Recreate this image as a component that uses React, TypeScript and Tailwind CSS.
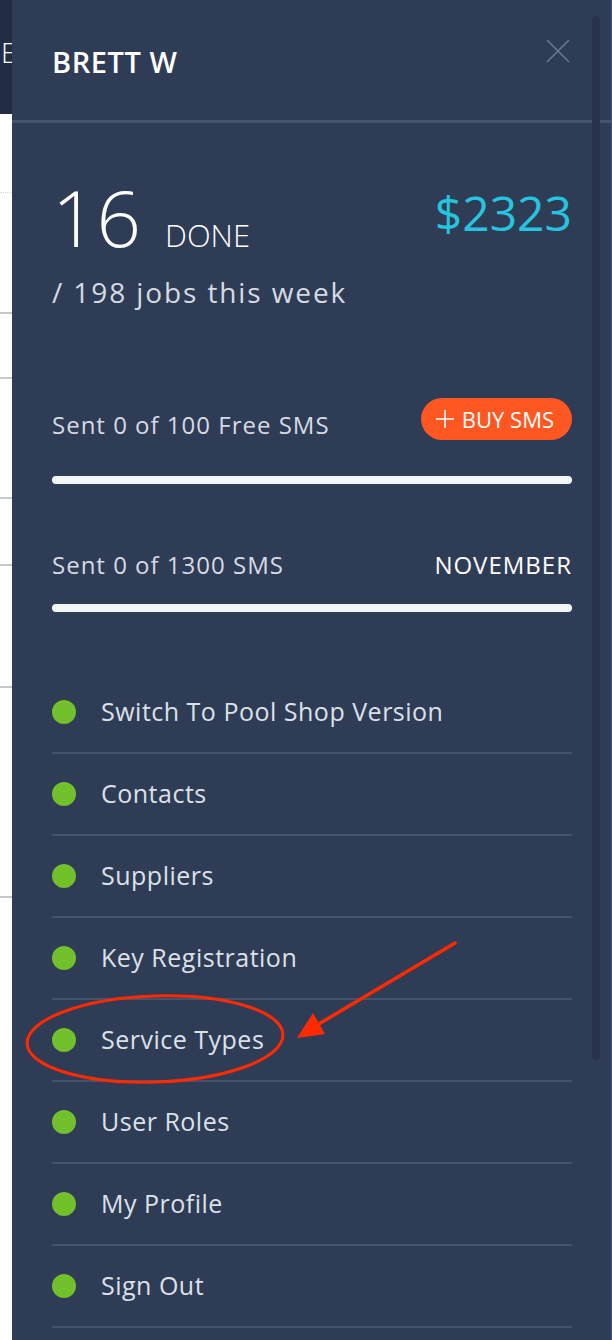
import React from 'react';

const menu = [
  'Switch To Pool Shop Version',
  'Contacts',
  'Suppliers',
  'Key Registration',
  'Service Types',
  'User Roles',
  'My Profile',
  'Sign Out',
];

function CloseIcon() {
  return (
    <svg width="24" height="24" viewBox="0 0 24 24" className="text-[#6b7894]">
      <path d="M1 1 L23 23 M23 1 L1 23" stroke="currentColor" strokeWidth="1.6" fill="none" />
    </svg>
  );
}

function Bar() {
  return <div className="h-[8px] w-full rounded-full bg-[#f4f7f9]" />;
}

export default function App() {
  return (
    <div
      className="relative flex h-[1340px] w-[612px] overflow-hidden bg-white"
      style={{ fontFamily: '"Open Sans", "Noto Sans", sans-serif' }}
    >
      {/* page behind the drawer */}
      <div className="flex w-[12px] shrink-0 flex-col">
        <div className="flex h-[114px] items-start overflow-hidden bg-[#222c42]">
          <span className="ml-[1px] mt-[38px] text-[28px] font-light leading-none text-white">E</span>
        </div>
        <div className="h-[78px]" />
        <div className="border-t border-dotted border-[#d8dde3]" />
        <div className="h-[119px]" />
        <div className="border-t-2 border-[#c8c8c8]" />
        <div className="h-[63px]" />
        <div className="border-t-2 border-[#c8c8c8]" />
        <div className="h-[118px]" />
        <div className="border-t-2 border-[#c8c8c8]" />
        <div className="h-[65px]" />
        <div className="border-t-2 border-[#c8c8c8]" />
        <div className="h-[120px]" />
        <div className="border-t-2 border-[#c8c8c8]" />
        <div className="h-[208px]" />
        <div className="border-t-2 border-[#c8c8c8]" />
      </div>

      {/* drawer */}
      <div className="relative flex-1 bg-[#2f3c56]">
        <div className="flex h-[120px] items-start justify-between pl-[40px] pr-[40px]">
          <h2 className="mt-[47px] text-[29px] font-semibold tracking-[0.02em] text-white leading-none">
            BRETT W
          </h2>
          <button className="mt-[39px] mr-[2px]">
            <CloseIcon />
          </button>
        </div>
        <div className="h-[3px] bg-[#46536d]" />

        <div className="px-[40px]">
          <div className="mt-[58px] flex items-start justify-between">
            <div className="flex items-baseline gap-[24px] text-white">
              <span className="text-[78px] font-light leading-[72px]">16</span>
              <span className="text-[31px] font-light leading-none">DONE</span>
            </div>
            <span className="mt-[8px] text-[48px] leading-none text-[#25c4df]">$2323</span>
          </div>
          <p className="mt-[24px] text-[28px] leading-[31px] tracking-[1.9px] text-[#d6dbe3]">/ 198 jobs this week</p>

          <div className="mt-[90px] flex items-center justify-between">
            <span className="pt-[12px] text-[24px] leading-[26px] tracking-[1px] text-[#d6dbe3]">Sent 0 of 100 Free SMS</span>
            <button className="flex h-[42px] items-center gap-[7px] rounded-full bg-[#ff5722] pl-[14px] pr-[18px] text-[22px] leading-none text-white">
              <svg width="20" height="20" viewBox="0 0 20 20">
                <path d="M10 1 V19 M1 10 H19" stroke="white" strokeWidth="1.6" />
              </svg>
              BUY SMS
            </button>
          </div>
          <div className="mt-[36px]">
            <Bar />
          </div>

          <div className="mt-[68px] flex items-center justify-between text-[24px] leading-[26px] tracking-[1px]">
            <span className="text-[#d6dbe3]">Sent 0 of 1300 SMS</span>
            <span className="text-white">NOVEMBER</span>
          </div>
          <div className="mt-[26px]">
            <Bar />
          </div>

          <ul className="mt-[60px]">
            {menu.map((m) => (
              <li key={m} className="flex h-[82px] items-center gap-[25px] border-b-2 border-[#46536d]">
                <span className="h-[24px] w-[24px] rounded-full bg-[#72c02c]" />
                <span className="text-[25px] tracking-[0.5px] text-[#dce1e8]">{m}</span>
              </li>
            ))}
          </ul>
        </div>

        {/* scrollbar */}
        <div className="absolute right-[12px] top-[16px] h-[1044px] w-[8px] rounded-full bg-[#28324a]" />
        <div className="absolute right-0 top-0 h-full w-[1px] bg-[#46567a]" />
      </div>

      {/* red markup over the menu */}
      <svg className="pointer-events-none absolute left-0 top-0" width="612" height="1340">
        <ellipse
          cx="155"
          cy="1039"
          rx="128"
          ry="43"
          fill="none"
          stroke="#ff2a00"
          strokeWidth="3"
          transform="rotate(-2 155 1039)"
        />
        <line x1="455" y1="943" x2="312" y2="1028" stroke="#ff2a00" strokeWidth="3.5" strokeLinecap="round" />
        <polygon points="297,1038 313,1013 325,1034" fill="#ff2a00" />
      </svg>
    </div>
  );
}
